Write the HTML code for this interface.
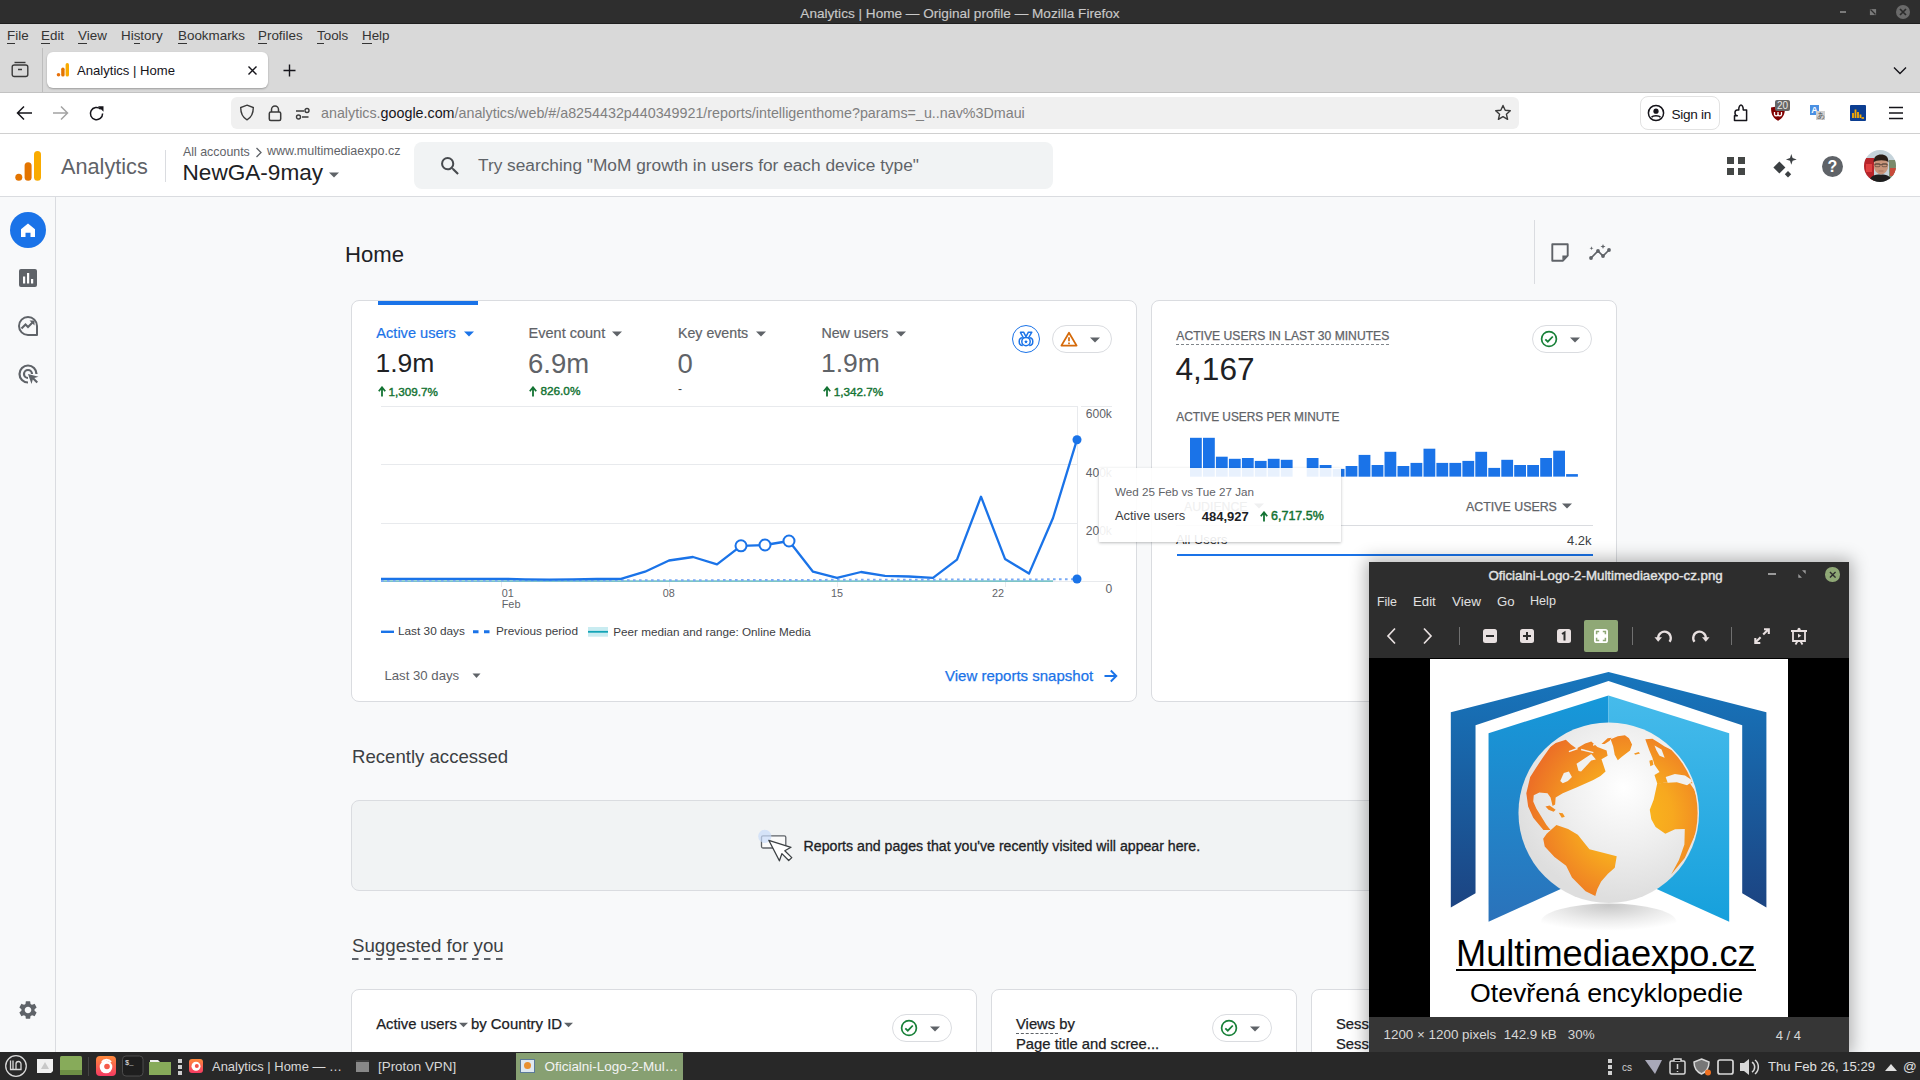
<!DOCTYPE html>
<html><head><meta charset="utf-8">
<style>
*{box-sizing:border-box;margin:0;padding:0}
html,body{width:1920px;height:1080px;overflow:hidden;background:#f8f9fa;font-family:"Liberation Sans",sans-serif;}
.a{position:absolute}
.t{position:absolute;white-space:nowrap;line-height:1}
.card{position:absolute;background:#fff;border:1px solid #dadce0;border-radius:8px}
u{text-decoration:none;border-bottom:1.2px solid currentColor}
</style></head><body>
<div class="a" style="left:0;top:0;width:1920px;height:24px;background:#2e2e2e"></div><div class="a" style="left:0;top:23px;width:1920px;height:1px;background:#1e1e1e"></div>
<div class="t" style="left:0;top:6.5px;width:1920px;text-align:center;font-size:13.6px;color:#c8c8c8;-webkit-text-stroke:0.15px #c8c8c8">Analytics | Home — Original profile — Mozilla Firefox</div>
<div class="a" style="left:1840px;top:11px;width:6px;height:2px;background:#7a7a7a"></div>
<svg class="a" style="left:1869px;top:8px" width="8" height="8" viewBox="0 0 8 8"><rect x="0.9" y="1.1" width="6.2" height="6" fill="#7a7a7a"/><path d="M1.5 1.5L6.5 6.5" stroke="#2e2e2e" stroke-width="1.3"/></svg>
<div class="a" style="left:1896px;top:5px;width:14px;height:14px;border-radius:50%;background:#6a6a6a"></div>
<svg class="a" style="left:1899px;top:8px" width="8" height="8" viewBox="0 0 8 8"><path d="M1 1L7 7M7 1L1 7" stroke="#2b2b2b" stroke-width="1.7"/></svg>
<div class="a" style="left:0;top:24px;width:1920px;height:69px;background:#d9d9d9"></div>
<div class="t " style="left:7px;top:28.66px;font-size:13.4px;color:#343434;"><u>F</u>ile</div>
<div class="t " style="left:41px;top:28.66px;font-size:13.4px;color:#343434;"><u>E</u>dit</div>
<div class="t " style="left:78px;top:28.66px;font-size:13.4px;color:#343434;"><u>V</u>iew</div>
<div class="t " style="left:121px;top:28.66px;font-size:13.4px;color:#343434;">Hi<u>s</u>tory</div>
<div class="t " style="left:178px;top:28.66px;font-size:13.4px;color:#343434;"><u>B</u>ookmarks</div>
<div class="t " style="left:258px;top:28.66px;font-size:13.4px;color:#343434;"><u>P</u>rofiles</div>
<div class="t " style="left:317px;top:28.66px;font-size:13.4px;color:#343434;"><u>T</u>ools</div>
<div class="t " style="left:362px;top:28.66px;font-size:13.4px;color:#343434;"><u>H</u>elp</div>
<div class="a" style="left:0;top:92px;width:1920px;height:1px;background:#c2c2c2"></div>
<svg class="a" style="left:11px;top:61px" width="18" height="17" viewBox="0 0 18 17"><path d="M3.5 1.5h11" stroke="#3a3a3a" stroke-width="1.4" fill="none"/><rect x="1.2" y="4" width="15.6" height="11.5" rx="2" stroke="#3a3a3a" stroke-width="1.4" fill="none"/><path d="M7 8.5h4" stroke="#3a3a3a" stroke-width="1.5"/></svg>
<div class="a" style="left:42px;top:48px;width:1px;height:44px;background:#bdbdbd"></div>
<div class="a" style="left:47px;top:52px;width:221px;height:36px;background:#fff;border-radius:6px;box-shadow:0 1px 2px rgba(0,0,0,.28)"></div>
<svg class="a" style="left:56px;top:62px" width="14" height="16" viewBox="0 0 14 16"><circle cx="2.5" cy="12.8" r="1.8" fill="#e8710a"/><rect x="5.2" y="5.5" width="3.4" height="9.1" rx="1.7" fill="#e37400"/><rect x="9.6" y="1" width="3.4" height="13.6" rx="1.7" fill="#f9ab00"/></svg>
<div class="t " style="left:77px;top:64.41px;font-size:13.1px;color:#15141a;">Analytics | Home</div>
<svg class="a" style="left:247px;top:65px" width="11" height="11" viewBox="0 0 11 11"><path d="M1.5 1.5L9.5 9.5M9.5 1.5L1.5 9.5" stroke="#15141a" stroke-width="1.4"/></svg>
<svg class="a" style="left:283px;top:64px" width="13" height="13" viewBox="0 0 13 13"><path d="M6.5 0.5V12.5M0.5 6.5H12.5" stroke="#15141a" stroke-width="1.4"/></svg>
<svg class="a" style="left:1893px;top:66px" width="14" height="9" viewBox="0 0 14 9"><path d="M1 1.5L7 7.5L13 1.5" stroke="#15141a" stroke-width="1.4" fill="none"/></svg>
<div class="a" style="left:0;top:93px;width:1920px;height:41px;background:#fff;border-bottom:1px solid #d0d0d0"></div>
<svg class="a" style="left:16px;top:105px" width="17" height="16" viewBox="0 0 17 16"><path d="M16 8H2M8 1.5L1.5 8L8 14.5" stroke="#15141a" stroke-width="1.5" fill="none"/></svg>
<svg class="a" style="left:52px;top:105px" width="17" height="16" viewBox="0 0 17 16"><path d="M1 8H15M9 1.5L15.5 8L9 14.5" stroke="#a3a3a3" stroke-width="1.5" fill="none"/></svg>
<svg class="a" style="left:88px;top:105px" width="17" height="17" viewBox="0 0 17 17"><path d="M14.6 8.5A6.1 6.1 0 1 1 12.7 4.1" stroke="#15141a" stroke-width="1.5" fill="none"/><path d="M10 1.2H15.5V6.7Z" fill="#15141a"/></svg>
<div class="a" style="left:231px;top:97px;width:1288px;height:32px;background:#f0f0f0;border-radius:6px"></div>
<svg class="a" style="left:239px;top:104px" width="16" height="17" viewBox="0 0 16 17"><path d="M8 1.2L14.3 3.6C14.3 10 12 13.8 8 15.8C4 13.8 1.7 10 1.7 3.6Z" stroke="#3a3a3a" stroke-width="1.4" fill="none"/></svg>
<svg class="a" style="left:268px;top:104px" width="14" height="18" viewBox="0 0 14 18"><path d="M3.5 8V5.5A3.5 3.5 0 0 1 10.5 5.5V8" stroke="#3a3a3a" stroke-width="1.5" fill="none"/><rect x="1.3" y="8" width="11.4" height="8.6" rx="1.5" stroke="#3a3a3a" stroke-width="1.5" fill="none"/></svg>
<svg class="a" style="left:295px;top:107px" width="16" height="13" viewBox="0 0 16 13"><path d="M1 4H9M13.5 10H7" stroke="#3a3a3a" stroke-width="1.4"/><circle cx="12" cy="3.5" r="2" stroke="#3a3a3a" stroke-width="1.4" fill="none"/><circle cx="3.5" cy="10" r="2" stroke="#3a3a3a" stroke-width="1.4" fill="none"/></svg>
<div class="t " style="left:321px;top:105.90px;font-size:14.3px;color:#808080;">analytics.<span style="color:#15141a">google.com</span>/analytics/web/#/a8254432p440349921/reports/intelligenthome?params=_u..nav%3Dmaui</div>
<svg class="a" style="left:1494px;top:104px" width="18" height="18" viewBox="0 0 18 18"><path d="M9 1.5L11.2 6.3L16.3 6.8L12.4 10.2L13.6 15.3L9 12.6L4.4 15.3L5.6 10.2L1.7 6.8L6.8 6.3Z" stroke="#3a3a3a" stroke-width="1.4" fill="none" stroke-linejoin="round"/></svg>
<div class="a" style="left:1640px;top:96px;width:80px;height:34px;border:1px solid #e2e2e2;border-radius:8px;background:#fff"></div>
<svg class="a" style="left:1647px;top:104px" width="18" height="18" viewBox="0 0 18 18"><circle cx="9" cy="9" r="7.6" stroke="#15141a" stroke-width="1.5" fill="none"/><circle cx="9" cy="7.2" r="2.6" fill="#15141a"/><path d="M4.5 13.3C6 11.3 12 11.3 13.5 13.3" stroke="#15141a" stroke-width="1.6" fill="none"/></svg>
<div class="t " style="left:1671.5px;top:107.58px;font-size:12.9px;color:#15141a;font-size:13.6px;letter-spacing:-0.3px;">Sign in</div>
<svg class="a" style="left:1730px;top:102px" width="20" height="21" viewBox="1730 102 20 21"><path d="M1734.5 120.5V115.8H1737.3C1734.2 115.5 1734.2 110 1737.3 109.9H1738.8C1738.5 106.5 1740.3 105 1741 105C1741.7 105 1743.5 106.5 1743.2 109.9H1746.6V120.5Z" stroke="#15141a" stroke-width="1.5" fill="none" stroke-linejoin="round"/></svg>
<svg class="a" style="left:1770px;top:105px" width="16" height="17" viewBox="0 0 16 17"><path d="M1 2.5L8 1.2L15 2.5C15 10 12.5 13.5 8 15.8C3.5 13.5 1 10 1 2.5Z" fill="#800000"/><path d="M4.5 7V9.5A1.8 1.8 0 0 0 8 9.5V7M8 9.5A1.8 1.8 0 0 0 11.5 9.5V7" stroke="#fff" stroke-width="1.3" fill="none"/></svg>
<div class="t" style="left:1775px;top:100px;width:15px;height:11px;background:#666;border-radius:2px;color:#e8e8e8;font-size:10px;line-height:11px;text-align:center">20</div>
<div class="t" style="left:1810px;top:105px;width:9px;height:10px;background:#4a90e2;color:#fff;font-size:9px;font-weight:bold;line-height:10px;text-align:center">A</div>
<div class="t" style="left:1816px;top:111px;width:9px;height:9px;background:#d0d0d0;color:#555;font-size:8px;line-height:9px;text-align:center">あ</div>
<div class="a" style="left:1850px;top:105px;width:16px;height:16px;background:#0b3d91;border-radius:1px"></div>
<svg class="a" style="left:1850px;top:105px" width="16" height="16" viewBox="0 0 16 16"><path d="M3 13V8M5.5 13V4.5M8 13V7M10.5 13V9.5" stroke="#f9ab00" stroke-width="1.8"/><path d="M11.5 13H14" stroke="#f9ab00" stroke-width="1.6"/></svg>
<svg class="a" style="left:1888px;top:106px" width="16" height="14" viewBox="0 0 16 14"><path d="M1 1.5H15M1 7H15M1 12.5H15" stroke="#15141a" stroke-width="1.5"/></svg>
<div class="a" style="left:0;top:134px;width:1920px;height:63px;background:#fff;border-bottom:1px solid #dadce0"></div>
<svg class="a" style="left:14px;top:150px" width="28" height="32" viewBox="0 0 28 32"><circle cx="4.8" cy="27.3" r="3.5" fill="#e37400"/><rect x="10.6" y="12.3" width="7" height="18.5" rx="3.5" fill="#e37400"/><rect x="20" y="1" width="7" height="29.8" rx="3.5" fill="#f9ab00"/></svg>
<div class="a" style="left:165px;top:150px;width:1px;height:32px;background:#dadce0"></div>
<div class="t " style="left:61px;top:155.83px;font-size:21.7px;color:#5f6368;">Analytics</div>
<div class="t " style="left:183px;top:145.50px;font-size:12.4px;color:#5f6368;">All accounts</div>
<svg class="a" style="left:255px;top:147px" width="8" height="11" viewBox="0 0 8 11"><path d="M1.5 1L6 5.5L1.5 10" stroke="#5f6368" stroke-width="1.3" fill="none"/></svg>
<div class="t " style="left:267px;top:145.42px;font-size:12.5px;color:#5f6368;">www.multimediaexpo.cz</div>
<div class="t " style="left:182.5px;top:161.87px;font-size:22.6px;color:#202124;">NewGA-9may</div>
<svg class="a" style="left:329px;top:172px" width="10" height="6" viewBox="0 0 10 6"><path d="M0 0.5H10L5 5.5Z" fill="#5f6368"/></svg>
<div class="a" style="left:414px;top:142px;width:639px;height:47px;background:#f1f3f4;border-radius:8px"></div>
<svg class="a" style="left:437.7px;top:154px" width="24.4" height="24.4" viewBox="0 0 24 24"><path d="M15.5 14h-.79l-.28-.27A6.47 6.47 0 0 0 16 9.5 6.5 6.5 0 1 0 9.5 16c1.61 0 3.09-.59 4.23-1.57l.27.28v.79l5 4.99L20.49 19l-4.99-5zm-6 0C7.01 14 5 11.99 5 9.5S7.01 5 9.5 5 14 7.01 14 9.5 11.99 14 9.5 14z" fill="#474a4e"/></svg>
<div class="t " style="left:478px;top:157.16px;font-size:17.3px;color:#5f6368;">Try searching "MoM growth in users for each device type"</div>
<svg class="a" style="left:1726px;top:156px" width="20" height="20" viewBox="0 0 20 20"><rect x="1" y="1" width="7" height="7" fill="#444746"/><rect x="12" y="1" width="7" height="7" fill="#444746"/><rect x="1" y="12" width="7" height="7" fill="#444746"/><rect x="12" y="12" width="7" height="7" fill="#444746"/></svg>
<svg class="a" style="left:1770px;top:152px" width="30" height="30" viewBox="1770 152 30 30"><path d="M1779.4 161.5L1785.4 167.5L1779.4 173.5L1773.4 167.5Z" fill="#3c4043"/><path d="M1791.3 154L1792.6 158.1L1796.7 159.4L1792.6 160.7L1791.3 164.8L1790 160.7L1785.9 159.4L1790 158.1Z" fill="#3c4043"/><path d="M1788 171L1791.2 174.2L1788 177.4L1784.8 174.2Z" fill="#3c4043"/></svg>
<div class="a" style="left:1822px;top:156px;width:21px;height:21px;border-radius:50%;background:#5f6368"></div>
<div class="t" style="left:1822px;top:158.5px;width:21px;text-align:center;font-size:16px;font-weight:bold;color:#fff">?</div>
<svg class="a" style="left:1864px;top:150px" width="32" height="32" viewBox="0 0 32 32"><defs><clipPath id="av"><circle cx="16" cy="16" r="16"/></clipPath></defs><g clip-path="url(#av)"><rect width="32" height="32" fill="#c5d3da"/><path d="M0 8H10V32H0Z" fill="#b8242a"/><path d="M2 14H8V22H2Z" fill="#e04040"/><path d="M25 10H32V32H25Z" fill="#7a8a6a"/><path d="M26 18H32V26H26Z" fill="#c84a3a"/><path d="M5 32C6 26 10 24.5 16.5 24.5C23 24.5 27 26 28 32Z" fill="#1e1e1e"/><ellipse cx="17" cy="15.5" rx="7.2" ry="9" fill="#c8957a"/><path d="M9.5 12.5C9.5 6.5 13 4.5 17 4.5C21.5 4.5 24.5 6.5 24.5 12.5C23 9.5 12 9.5 9.5 12.5Z" fill="#2a1e16"/><path d="M10.5 14.5H23.5" stroke="#5a4a40" stroke-width="0.7"/><rect x="11" y="13.5" width="5" height="3.2" rx="1" stroke="#4a3a30" stroke-width="0.6" fill="none"/><rect x="18" y="13.5" width="5" height="3.2" rx="1" stroke="#4a3a30" stroke-width="0.6" fill="none"/><path d="M14.5 21H19.5" stroke="#9a6a58" stroke-width="0.8"/></g></svg>
<div class="a" style="left:55px;top:197px;width:1px;height:855px;background:#dadce0"></div>
<div class="a" style="left:10px;top:212px;width:36px;height:36px;border-radius:50%;background:#1a73e8"></div>
<svg class="a" style="left:19px;top:221px" width="18" height="18" viewBox="0 0 18 18"><path d="M9 2.5L16 8.3V16H11.5V11.8H6.5V16H2V8.3Z" fill="#fff"/></svg>
<svg class="a" style="left:18px;top:268px" width="20" height="20" viewBox="0 0 20 20"><rect x="1" y="1" width="18" height="18" rx="2" fill="#5f6368"/><rect x="5" y="8.5" width="2.2" height="7" fill="#fff"/><rect x="9" y="5" width="2.2" height="10.5" fill="#fff"/><rect x="13" y="11" width="2.2" height="4.5" fill="#fff"/></svg>
<svg class="a" style="left:17px;top:315px" width="22" height="22" viewBox="0 0 22 22"><path d="M20 11A9 9 0 1 0 11 20H20Z" stroke="#5f6368" stroke-width="2" fill="none" stroke-linejoin="round"/><path d="M4.5 13.5L8.5 9.5L11 12L16 7" stroke="#5f6368" stroke-width="2" fill="none"/><path d="M12.5 5.5H17.5V10.5Z" fill="#5f6368"/></svg>
<svg class="a" style="left:17px;top:363px" width="22" height="22" viewBox="0 0 22 22"><path d="M11 19.5A8.5 8.5 0 1 1 19.5 11" stroke="#5f6368" stroke-width="2.2" fill="none"/><path d="M11 15A4 4 0 1 1 15 11" stroke="#5f6368" stroke-width="2.2" fill="none"/><path d="M11 11L14.5 21L15.8 16.5L19.5 20.3L21 18.8L17.3 15L21.5 13.8Z" fill="#5f6368"/></svg>
<svg class="a" style="left:17px;top:999px" width="22" height="22" viewBox="0 0 24 24"><path d="M19.14 12.94c.04-.3.06-.61.06-.94 0-.32-.02-.64-.07-.94l2.03-1.58a.49.49 0 0 0 .12-.61l-1.92-3.32a.488.488 0 0 0-.59-.22l-2.39.96c-.5-.38-1.030-.7-1.62-.94l-.36-2.540a.484.484 0 0 0-.48-.41h-3.84c-.24 0-.43.17-.47.41l-.36 2.54c-.59.24-1.13.57-1.62.94l-2.39-.96c-.22-.08-.47 0-.59.22L2.74 8.87c-.12.21-.08.47.12.61l2.03 1.58c-.05.3-.09.63-.09.94s.02.64.07.94l-2.03 1.58a.49.49 0 0 0-.12.61l1.92 3.32c.12.22.37.29.59.22l2.39-.96c.5.38 1.03.7 1.62.94l.36 2.54c.05.24.24.41.48.41h3.84c.24 0 .44-.17.47-.41l.36-2.54c.59-.24 1.13-.56 1.62-.94l2.39.96c.22.08.47 0 .59-.22l1.92-3.32c.12-.22.07-.47-.12-.61l-2.01-1.58zM12 15.6c-1.98 0-3.6-1.62-3.6-3.6s1.62-3.6 3.6-3.6 3.6 1.62 3.6 3.6-1.62 3.6-3.6 3.6z" fill="#5f6368"/></svg>
<div class="t " style="left:345px;top:244.09px;font-size:22.1px;color:#202124;">Home</div>
<div class="a" style="left:1534px;top:220px;width:1px;height:64px;background:#dadce0"></div>
<svg class="a" style="left:1550px;top:242px" width="20" height="20" viewBox="0 0 20 20"><path d="M2.3 2.3H17.7V13.7L13 18.7H2.3Z" stroke="#5f6368" stroke-width="1.9" fill="none" stroke-linejoin="round"/><path d="M12.4 18V13.4H17.4Z" fill="#5f6368"/></svg>
<svg class="a" style="left:1588px;top:242px" width="24" height="20" viewBox="0 0 24 20"><path d="M3 16L10 9L15 14L21 8" stroke="#5f6368" stroke-width="1.7" fill="none"/><circle cx="3" cy="16" r="1.9" fill="#5f6368"/><circle cx="10" cy="9" r="1.9" fill="#5f6368"/><circle cx="15" cy="14" r="1.9" fill="#5f6368"/><circle cx="21" cy="8" r="1.9" fill="#5f6368"/><path d="M3.5 4.3L4 5.8L5.5 6.3L4 6.8L3.5 8.3L3 6.8L1.5 6.3L3 5.8Z" fill="#5f6368"/><path d="M15 2L15.7 3.8L17.5 4.5L15.7 5.2L15 7L14.3 5.2L12.5 4.5L14.3 3.8Z" fill="#5f6368"/></svg>
<div class="card" style="left:351px;top:300px;width:786px;height:402px"></div>
<div class="a" style="left:378px;top:301px;width:100px;height:4px;background:#1a73e8"></div>
<div class="t " style="left:376.3px;top:325.64px;font-size:14.6px;color:#1a73e8;-webkit-text-stroke:0.2px currentColor;">Active users</div>
<svg class="a" style="left:463.5px;top:330.5px" width="10" height="6" viewBox="0 0 10 6"><path d="M0 0.5H10L5 5.5Z" fill="#1a73e8"/></svg>
<div class="t " style="left:528.6px;top:325.73px;font-size:14.5px;color:#5f6368;-webkit-text-stroke:0.2px currentColor;">Event count</div>
<svg class="a" style="left:612px;top:330.5px" width="10" height="6" viewBox="0 0 10 6"><path d="M0 0.5H10L5 5.5Z" fill="#5f6368"/></svg>
<div class="t " style="left:678px;top:325.98px;font-size:14.2px;color:#5f6368;-webkit-text-stroke:0.2px currentColor;">Key events</div>
<svg class="a" style="left:756px;top:330.5px" width="10" height="6" viewBox="0 0 10 6"><path d="M0 0.5H10L5 5.5Z" fill="#5f6368"/></svg>
<div class="t " style="left:821.4px;top:325.98px;font-size:14.2px;color:#5f6368;-webkit-text-stroke:0.2px currentColor;">New users</div>
<svg class="a" style="left:895.5px;top:330.5px" width="10" height="6" viewBox="0 0 10 6"><path d="M0 0.5H10L5 5.5Z" fill="#5f6368"/></svg>
<div class="t " style="left:375.5px;top:350.37px;font-size:26.5px;color:#202124;">1.9m</div>
<div class="t " style="left:528px;top:349.52px;font-size:27.5px;color:#5f6368;">6.9m</div>
<div class="t " style="left:677.5px;top:349.52px;font-size:27.5px;color:#5f6368;">0</div>
<div class="t " style="left:821px;top:350.37px;font-size:26.5px;color:#5f6368;">1.9m</div>
<svg class="a" style="left:377.5px;top:385.5px" width="8" height="11" viewBox="0 0 8 11"><path d="M4 10.5V2.5M0.8 5.2L4 1.3L7.2 5.2" stroke="#137333" stroke-width="1.8" fill="none"/></svg>
<div class="t " style="left:388.6px;top:385.90px;font-size:11.7px;color:#137333;-webkit-text-stroke:0.4px #137333;">1,309.7%</div>
<svg class="a" style="left:529px;top:385.5px" width="8" height="11" viewBox="0 0 8 11"><path d="M4 10.5V2.5M0.8 5.2L4 1.3L7.2 5.2" stroke="#137333" stroke-width="1.8" fill="none"/></svg>
<div class="t " style="left:540.4px;top:385.81px;font-size:11.8px;color:#137333;-webkit-text-stroke:0.4px #137333;">826.0%</div>
<div class="t " style="left:678px;top:382.84px;font-size:12px;color:#3c4043;">-</div>
<svg class="a" style="left:822.5px;top:385.5px" width="8" height="11" viewBox="0 0 8 11"><path d="M4 10.5V2.5M0.8 5.2L4 1.3L7.2 5.2" stroke="#137333" stroke-width="1.8" fill="none"/></svg>
<div class="t " style="left:833.7px;top:385.90px;font-size:11.7px;color:#137333;-webkit-text-stroke:0.4px #137333;">1,342.7%</div>
<div class="a" style="left:1012px;top:325px;width:28px;height:28px;border-radius:50%;border:1.5px solid #1a73e8"></div>
<svg class="a" style="left:1014px;top:328px" width="24" height="22" viewBox="1014 328 24 22"><path d="M1020.2 332.2H1023.6L1026 336.6L1028.4 332.2H1031.8L1028.5 338" stroke="#1a73e8" stroke-width="1.5" fill="none" stroke-linejoin="round"/><path d="M1023.5 338L1020.2 332.2" stroke="#1a73e8" stroke-width="1.5"/><circle cx="1026" cy="341.6" r="4.2" stroke="#1a73e8" stroke-width="1.5" fill="none"/><path d="M1022.6 337.8C1019.8 337.8 1019.2 340 1019.2 341.6C1019.2 343.4 1020.3 345.6 1022.8 345.6M1029.4 337.8C1032.2 337.8 1032.8 340 1032.8 341.6C1032.8 343.4 1031.7 345.6 1029.2 345.6" stroke="#1a73e8" stroke-width="1.5" fill="none"/><path d="M1026 339.8L1026.6 341.1L1028 341.2L1026.9 342.1L1027.3 343.5L1026 342.7L1024.7 343.5L1025.1 342.1L1024 341.2L1025.4 341.1Z" fill="#1a73e8"/></svg>
<div class="a" style="left:1052px;top:325px;width:60px;height:28px;border-radius:14px;border:1px solid #dadce0;background:#fff"></div>
<svg class="a" style="left:1060px;top:331px" width="18" height="16" viewBox="0 0 18 16"><path d="M9 1.8L16.6 14.6H1.4Z" stroke="#d56a0a" stroke-width="1.8" fill="none" stroke-linejoin="round"/><path d="M9 6.2V10.2M9 11.6V13.2" stroke="#d56a0a" stroke-width="1.7"/></svg>
<svg class="a" style="left:1090px;top:337px" width="10" height="6" viewBox="0 0 10 6"><path d="M0 0.5H10L5 5.5Z" fill="#5f6368"/></svg>
<svg class="a" style="left:0;top:0" width="1920" height="1080" viewBox="0 0 1920 1080">
<g stroke="#e8eaed" stroke-width="1"><path d="M381 406.5H1077M381 464.5H1077M381 523.5H1077M381 581.5H1111"/><path d="M1081 406.5H1112"/></g>
<path d="M1077.5 406V581M501.5 581V587M669.5 581V587M837.5 581V587M1005.5 581V587" stroke="#e8eaed" stroke-width="1"/>
<path d="M381 581.2H1053" stroke="#7cc4c7" stroke-width="1.7"/>
<path d="M381 580.9L1077 579.3" stroke="#7aaaf5" stroke-width="2" stroke-dasharray="2.6,3.4" fill="none"/>
<polyline points="381,578.8 405,578.8 429,578.8 453,578.8 477,578.8 501,578.8 525,579.3 549,579.6 573,579.4 597,579.0 621,578.9 645,571.7 669,560.5 693,557 717,564.4 741,545.8 765,545 789,541 813,571.7 837,577.8 861,572 885,575.8 909,576.5 933,577.8 957,559.7 981,496.7 1005,558.9 1029,573.6 1053,518 1077,439.7" fill="none" stroke="#1a73e8" stroke-width="2.3" stroke-linejoin="round"/>
<circle cx="741" cy="545.8" r="5.5" fill="#fff" stroke="#1a73e8" stroke-width="2"/>
<circle cx="765" cy="545" r="5.5" fill="#fff" stroke="#1a73e8" stroke-width="2"/>
<circle cx="789" cy="541" r="5.5" fill="#fff" stroke="#1a73e8" stroke-width="2"/>
<circle cx="1077" cy="439.7" r="4.5" fill="#1a73e8"/>
<circle cx="1077" cy="579" r="4.5" fill="#1a73e8"/>
</svg>
<div class="t " style="left:1085.7px;top:408.06px;font-size:12.1px;color:#5f6368;">600k</div>
<div class="t " style="left:1085.7px;top:466.56px;font-size:12.1px;color:#5f6368;">400k</div>
<div class="t " style="left:1085.7px;top:525.06px;font-size:12.1px;color:#5f6368;">200k</div>
<div class="t " style="left:1105.5px;top:582.76px;font-size:12.1px;color:#5f6368;">0</div>
<div class="t " style="left:501.7px;top:587.56px;font-size:10.8px;color:#5f6368;">01</div>
<div class="t " style="left:501.7px;top:599.27px;font-size:10.9px;color:#5f6368;">Feb</div>
<div class="t " style="left:662.8px;top:587.56px;font-size:10.8px;color:#5f6368;">08</div>
<div class="t " style="left:831px;top:587.56px;font-size:10.8px;color:#5f6368;">15</div>
<div class="t " style="left:992px;top:587.56px;font-size:10.8px;color:#5f6368;">22</div>
<svg class="a" style="left:380px;top:626px" width="232" height="12"><path d="M1 5.8H14" stroke="#1a73e8" stroke-width="2.4"/><path d="M93 5.8H110" stroke="#1a73e8" stroke-width="3" stroke-dasharray="5.5,5.5"/><rect x="208" y="1" width="20" height="9.7" fill="#c9ecf1"/><path d="M208 5.8H228" stroke="#12a4b6" stroke-width="1.8"/></svg>
<div class="t " style="left:398px;top:625.61px;font-size:11.8px;color:#3c4043;">Last 30 days</div>
<div class="t " style="left:496px;top:625.61px;font-size:11.8px;color:#3c4043;">Previous period</div>
<div class="t " style="left:613.3px;top:625.70px;font-size:11.7px;color:#3c4043;">Peer median and range: Online Media</div>
<div class="t " style="left:384.4px;top:669.33px;font-size:13.2px;color:#5f6368;">Last 30 days</div>
<svg class="a" style="left:472px;top:673px" width="9" height="6" viewBox="0 0 9 6"><path d="M0.5 0.5H8.5L4.5 5Z" fill="#5f6368"/></svg>
<div class="t " style="left:945px;top:668.30px;font-size:15px;color:#1a73e8;-webkit-text-stroke:0.25px #1a73e8;">View reports snapshot</div>
<svg class="a" style="left:1104px;top:669px" width="14" height="14" viewBox="0 0 14 14"><path d="M0.5 7H12.3M6.8 1.5L12.3 7L6.8 12.5" stroke="#1a73e8" stroke-width="1.9" fill="none"/></svg>
<div class="card" style="left:1151px;top:300px;width:466px;height:402px"></div>
<div class="t " style="left:1176.3px;top:330.32px;font-size:12.15px;color:#5f6368;-webkit-text-stroke:0.25px #5f6368;">ACTIVE USERS IN LAST 30 MINUTES</div>
<div class="a" style="left:1176px;top:344px;width:213px;height:0;border-top:1px dashed #80868b"></div>
<div class="a" style="left:1532px;top:325px;width:60px;height:28px;border-radius:14px;border:1px solid #dadce0;background:#fff"></div>
<svg class="a" style="left:1540px;top:330px" width="18" height="18" viewBox="0 0 18 18"><circle cx="9" cy="9" r="7.4" stroke="#188038" stroke-width="1.7" fill="none"/><path d="M5.3 9.3L7.8 11.7L12.8 6.5" stroke="#188038" stroke-width="1.8" fill="none"/></svg>
<svg class="a" style="left:1570px;top:337px" width="10" height="6" viewBox="0 0 10 6"><path d="M0 0.5H10L5 5.5Z" fill="#5f6368"/></svg>
<div class="t " style="left:1175.5px;top:353.95px;font-size:31.6px;color:#202124;">4,167</div>
<div class="t " style="left:1176.3px;top:411.67px;font-size:11.85px;color:#5f6368;-webkit-text-stroke:0.25px #5f6368;">ACTIVE USERS PER MINUTE</div>
<svg class="a" style="left:0;top:0" width="1920" height="1080"><g fill="#1a73e8"><rect x="1190.0" y="437.8" width="11.8" height="38.9"/><rect x="1203.0" y="437.8" width="11.8" height="38.9"/><rect x="1215.9" y="456.7" width="11.8" height="20.0"/><rect x="1228.9" y="458.8" width="11.8" height="17.9"/><rect x="1241.9" y="458.0" width="11.8" height="18.7"/><rect x="1254.8" y="460.9" width="11.8" height="15.8"/><rect x="1267.8" y="458.8" width="11.8" height="17.9"/><rect x="1280.8" y="459.8" width="11.8" height="16.9"/><rect x="1293.8" y="476.7" width="11.8" height="0.0"/><rect x="1306.7" y="458.0" width="11.8" height="18.7"/><rect x="1319.7" y="465.0" width="11.8" height="11.7"/><rect x="1332.7" y="468.9" width="11.8" height="7.8"/><rect x="1345.6" y="466.0" width="11.8" height="10.6"/><rect x="1358.6" y="454.9" width="11.8" height="21.8"/><rect x="1371.6" y="465.0" width="11.8" height="11.7"/><rect x="1384.5" y="451.8" width="11.8" height="24.9"/><rect x="1397.5" y="466.0" width="11.8" height="10.6"/><rect x="1410.5" y="462.9" width="11.8" height="13.7"/><rect x="1423.5" y="448.7" width="11.8" height="28.0"/><rect x="1436.4" y="462.9" width="11.8" height="13.7"/><rect x="1449.4" y="462.9" width="11.8" height="13.7"/><rect x="1462.4" y="460.9" width="11.8" height="15.8"/><rect x="1475.3" y="451.8" width="11.8" height="24.9"/><rect x="1488.3" y="467.9" width="11.8" height="8.8"/><rect x="1501.3" y="459.8" width="11.8" height="16.9"/><rect x="1514.2" y="465.0" width="11.8" height="11.7"/><rect x="1527.2" y="465.0" width="11.8" height="11.7"/><rect x="1540.2" y="458.0" width="11.8" height="18.7"/><rect x="1553.2" y="450.7" width="11.8" height="25.9"/><rect x="1566.1" y="474.1" width="11.8" height="2.6"/></g></svg>
<div class="t " style="left:1184px;top:500.79px;font-size:12.3px;color:#5f6368;-webkit-text-stroke:0.25px #5f6368;">AUDIENCE</div>
<svg class="a" style="left:1254px;top:503px" width="10" height="6" viewBox="0 0 10 6"><path d="M0 0.5H10L5 5.5Z" fill="#5f6368"/></svg>
<div class="t " style="left:1466px;top:500.70px;font-size:12.4px;color:#5f6368;-webkit-text-stroke:0.25px #5f6368;">ACTIVE USERS</div>
<svg class="a" style="left:1562px;top:503px" width="10" height="6" viewBox="0 0 10 6"><path d="M0 0.5H10L5 5.5Z" fill="#5f6368"/></svg>
<div class="a" style="left:1176px;top:525px;width:417px;height:1px;background:#dadce0"></div>
<div class="t " style="left:1176px;top:534.48px;font-size:12.9px;color:#202124;">All Users</div>
<div class="t " style="left:1567px;top:534.40px;font-size:13px;color:#3c4043;">4.2k</div>
<div class="a" style="left:1177px;top:554px;width:416px;height:2px;background:#1a73e8"></div>
<div class="a" style="left:1099px;top:468px;width:242px;height:74px;background:rgba(255,255,255,0.9);box-shadow:0 1px 3px rgba(60,64,67,.35);border-radius:1px"></div>
<div class="t " style="left:1115px;top:485.74px;font-size:11.65px;color:#5f6368;">Wed 25 Feb vs Tue 27 Jan</div>
<div class="t " style="left:1115px;top:509.78px;font-size:12.9px;color:#3c4043;">Active users</div>
<div class="t " style="left:1201.7px;top:509.70px;font-size:13px;color:#202124;font-weight:bold;">484,927</div>
<svg class="a" style="left:1259.5px;top:510.5px" width="8" height="11" viewBox="0 0 8 11"><path d="M4 10.5V2.5M0.8 5.2L4 1.3L7.2 5.2" stroke="#137333" stroke-width="1.8" fill="none"/></svg>
<div class="t " style="left:1271px;top:510.12px;font-size:12.5px;color:#137333;-webkit-text-stroke:0.45px #137333;">6,717.5%</div>
<div class="t " style="left:352px;top:747.96px;font-size:18.6px;color:#3c4043;">Recently accessed</div>
<div class="a" style="left:351px;top:800px;width:1300px;height:91px;background:#f1f3f4;border:1px solid #dadce0;border-radius:8px"></div>
<svg class="a" style="left:755px;top:827px" width="42" height="38" viewBox="755 827 42 38"><rect x="761.5" y="835.8" width="24.3" height="12.2" rx="1.5" stroke="#5f6368" stroke-width="1.3" fill="#fafafa"/><circle cx="764.8" cy="836.4" r="6.6" fill="#c9dcfa" opacity="0.7"/><path d="M768.8 840.3L791 847.3L784.8 850.8L791.8 857.6L788.7 860.5L781.9 853.6L779.4 860.8Z" stroke="#3c4043" stroke-width="1.3" fill="#fff" stroke-linejoin="round"/></svg>
<div class="t " style="left:803.6px;top:839.02px;font-size:14.15px;color:#202124;-webkit-text-stroke:0.3px #202124;">Reports and pages that you've recently visited will appear here.</div>
<div class="t " style="left:352px;top:936.67px;font-size:18.7px;color:#3c4043;">Suggested for you</div>
<svg class="a" style="left:352px;top:957px" width="153" height="4"><path d="M0 2H153" stroke="#5f6368" stroke-width="1.8" stroke-dasharray="6.5,5.5"/></svg>
<div class="card" style="left:351px;top:989px;width:626px;height:120px"></div>
<div class="card" style="left:991px;top:989px;width:306px;height:120px"></div>
<div class="card" style="left:1311px;top:989px;width:306px;height:120px"></div>
<div class="t " style="left:376.2px;top:1017.47px;font-size:14.8px;color:#202124;-webkit-text-stroke:0.25px #202124;">Active users</div>
<svg class="a" style="left:458.5px;top:1022px" width="9" height="6" viewBox="0 0 10 6"><path d="M0 0.5H10L5 5.5Z" fill="#5f6368"/></svg>
<div class="t " style="left:471px;top:1017.39px;font-size:14.9px;color:#202124;-webkit-text-stroke:0.25px #202124;">by Country ID</div>
<svg class="a" style="left:564px;top:1022px" width="9" height="6" viewBox="0 0 10 6"><path d="M0 0.5H10L5 5.5Z" fill="#5f6368"/></svg>
<div class="a" style="left:892px;top:1014px;width:60px;height:28px;border-radius:14px;border:1px solid #dadce0;background:#fff"></div>
<svg class="a" style="left:900px;top:1019px" width="18" height="18" viewBox="0 0 18 18"><circle cx="9" cy="9" r="7.4" stroke="#188038" stroke-width="1.7" fill="none"/><path d="M5.3 9.3L7.8 11.7L12.8 6.5" stroke="#188038" stroke-width="1.8" fill="none"/></svg>
<svg class="a" style="left:930px;top:1026px" width="10" height="6" viewBox="0 0 10 6"><path d="M0 0.5H10L5 5.5Z" fill="#5f6368"/></svg>
<div class="a" style="left:1212px;top:1014px;width:60px;height:28px;border-radius:14px;border:1px solid #dadce0;background:#fff"></div>
<svg class="a" style="left:1220px;top:1019px" width="18" height="18" viewBox="0 0 18 18"><circle cx="9" cy="9" r="7.4" stroke="#188038" stroke-width="1.7" fill="none"/><path d="M5.3 9.3L7.8 11.7L12.8 6.5" stroke="#188038" stroke-width="1.8" fill="none"/></svg>
<svg class="a" style="left:1250px;top:1026px" width="10" height="6" viewBox="0 0 10 6"><path d="M0 0.5H10L5 5.5Z" fill="#5f6368"/></svg>
<div class="t " style="left:1016px;top:1017.47px;font-size:14.8px;color:#202124;-webkit-text-stroke:0.25px #202124;">Views by</div>
<div class="a" style="left:1016px;top:1033px;width:42px;height:0;border-top:1px dashed #5f6368"></div>
<div class="t " style="left:1016px;top:1037.47px;font-size:14.8px;color:#202124;-webkit-text-stroke:0.25px #202124;">Page title and scree...</div>
<div class="t " style="left:1336px;top:1017.47px;font-size:14.8px;color:#202124;-webkit-text-stroke:0.25px #202124;">Sessions</div>
<div class="t " style="left:1336px;top:1037.47px;font-size:14.8px;color:#202124;-webkit-text-stroke:0.25px #202124;">Sessions</div>
<div class="a" style="left:1369px;top:562px;width:480px;height:490px;background:#2d2d2d;box-shadow:0 0 16px 3px rgba(0,0,0,.30)"></div>
<div class="t " style="left:1488.4px;top:569.04px;font-size:13.3px;color:#e4e4e4;-webkit-text-stroke:0.4px #e4e4e4;">Oficialni-Logo-2-Multimediaexpo-cz.png</div>
<div class="a" style="left:1768px;top:573px;width:8px;height:2px;background:#9a9a9a"></div>
<svg class="a" style="left:1798px;top:570px" width="8" height="8" viewBox="0 0 8 8"><path d="M0.3 7.7V4L4 7.7Z M7.7 0.3V4L4 0.3Z" fill="#9a9a9a"/></svg>
<div class="a" style="left:1825px;top:567px;width:14.5px;height:14.5px;border-radius:50%;background:#8fa876"></div>
<svg class="a" style="left:1828.5px;top:570.5px" width="7.5" height="7.5" viewBox="0 0 8 8"><path d="M1 1L7 7M7 1L1 7" stroke="#2d2d2d" stroke-width="1.5"/></svg>
<div class="t " style="left:1377px;top:595.50px;font-size:12.4px;color:#e0e0e0;">File</div>
<div class="t " style="left:1413px;top:594.83px;font-size:13.2px;color:#e0e0e0;">Edit</div>
<div class="t " style="left:1452px;top:594.57px;font-size:13.5px;color:#e0e0e0;">View</div>
<div class="t " style="left:1497px;top:594.83px;font-size:13.2px;color:#e0e0e0;">Go</div>
<div class="t " style="left:1530px;top:595.33px;font-size:12.6px;color:#e0e0e0;">Help</div>
<svg class="a" style="left:1369px;top:616px" width="480" height="40" viewBox="1369 616 480 40">
<g stroke="#e8e0e0" stroke-width="1.7" fill="none">
<path d="M1395 628.5L1388 636L1395 643.5"/><path d="M1424 628.5L1431 636L1424 643.5"/>
<path d="M1658.2 638.5A6.3 6.3 0 1 1 1669.5 641.8" stroke-width="2.3"/><path d="M1705.8 638.5A6.3 6.3 0 1 0 1694.5 641.8" stroke-width="2.3"/>
<path d="M1763.2 634.5L1768.5 629.2M1764 629.2H1768.8V634M1760.6 637.2L1755.3 642.5M1755.3 638V643H1760.3" stroke-width="2.1"/>
</g>
<path d="M1459.5 627V645M1632.5 627V645M1731.5 627V645" stroke="#707070" stroke-width="1"/>
<rect x="1483" y="629" width="14" height="14" rx="2.5" fill="#e8e0e0"/><path d="M1486 636H1494" stroke="#2d2d2d" stroke-width="2"/>
<rect x="1520" y="629" width="14" height="14" rx="2.5" fill="#e8e0e0"/><path d="M1523 636H1531M1527 632V640" stroke="#2d2d2d" stroke-width="2"/>
<rect x="1557" y="629" width="14" height="14" rx="2.5" fill="#e8e0e0"/><path d="M1562 634L1564.5 632.5V640.5" stroke="#2d2d2d" stroke-width="2" fill="none"/>
<rect x="1584" y="620" width="34" height="32" rx="2" fill="#8fa876"/>
<rect x="1594" y="629" width="14" height="14" rx="2.6" fill="#fff"/><path d="M1596.6 634.2V631.6H1599.2M1602.8 631.6H1605.4V634.2M1605.4 637.8V640.4H1602.8M1599.2 640.4H1596.6V637.8" stroke="#8fa876" stroke-width="1.5" fill="none"/>
<path d="M1654.5 637.3H1662L1658.2 641.8Z" fill="#e8e0e0"/><path d="M1709.5 637.3H1702L1705.8 641.8Z" fill="#e8e0e0"/>
<path d="M1791 631H1807M1793 631V641H1805V631M1797.3 641.5L1795.5 644.5M1800.7 641.5L1802.5 644.5" stroke="#e8e0e0" stroke-width="1.8" fill="none"/><path d="M1798 633.8L1801.3 635.8L1798 637.8Z" fill="#e8e0e0"/><circle cx="1799" cy="629.3" r="1.5" fill="#e8e0e0"/>
</svg>
<div class="a" style="left:1369px;top:658px;width:480px;height:359px;background:#000"></div>
<div class="a" style="left:1430px;top:659px;width:358px;height:358px;background:#fff"></div>
<svg class="a" style="left:1430px;top:659px" width="358" height="281" viewBox="0 0 1376 1080">
<defs>
<linearGradient id="ob" x1="0" y1="0" x2="0" y2="1"><stop offset="0" stop-color="#1776bd"/><stop offset="1" stop-color="#1c4482"/></linearGradient>
<linearGradient id="lp" x1="0" y1="0" x2="0" y2="1"><stop offset="0" stop-color="#1699da"/><stop offset="1" stop-color="#2b72ba"/></linearGradient>
<linearGradient id="rp" x1="0" y1="0" x2="0" y2="1"><stop offset="0" stop-color="#46bbeb"/><stop offset="1" stop-color="#16a0dc"/></linearGradient>
<radialGradient id="gl" cx="0.58" cy="0.36" r="0.62"><stop offset="0" stop-color="#ffffff"/><stop offset="0.55" stop-color="#eeeeee"/><stop offset="1" stop-color="#dedede"/></radialGradient>
<radialGradient id="or" gradientUnits="userSpaceOnUse" cx="900" cy="560" r="700"><stop offset="0" stop-color="#fbbd1b"/><stop offset="0.5" stop-color="#f4a020"/><stop offset="1" stop-color="#ec7426"/></radialGradient>
<radialGradient id="sh" cx="0.5" cy="0.05" r="0.7"><stop offset="0" stop-color="#c8c8c8"/><stop offset="0.6" stop-color="#ececec"/><stop offset="1" stop-color="#ffffff"/></radialGradient>
</defs>
<path d="M80 205L686 50L1293 205V955L1200 900V255L686 85L175 255V900L80 955Z" fill="url(#ob)"/>
<path d="M225 285L686 140V800L225 1010Z" fill="url(#lp)"/>
<path d="M1150 285L686 140V800L1150 1010Z" fill="url(#rp)"/>
<ellipse cx="687" cy="1010" rx="260" ry="70" fill="url(#sh)"/>
<circle cx="687" cy="591" r="347" fill="url(#gl)"/>
<g transform="translate(345.9 234.4) scale(0.39153)">
<defs><clipPath id="gc"><circle cx="873.7" cy="913" r="870"/></clipPath>
<radialGradient id="or2" gradientUnits="userSpaceOnUse" cx="1050" cy="950" r="1000"><stop offset="0" stop-color="#fbbd1c"/><stop offset="0.45" stop-color="#f7a81f"/><stop offset="1" stop-color="#ec7026"/></radialGradient></defs>
<g clip-path="url(#gc)">
<g fill="url(#or2)">
<path d="M300 262L350 225L450 195L500 240L555 280L640 230L700 212L760 265L850 300L860 350L800 385L840 505L790 550L720 590L560 660L420 720L350 760L345 830L320 845L300 760L270 720L190 712L135 740L130 800L160 870L210 950L260 1030L300 1080L230 1080L130 960L80 850L62 720L100 560L150 480L230 360Z"/>
<path d="M890 190L960 160L1030 150L1070 180L1100 240L1080 300L1000 360L960 395L930 340L915 260Z"/>
<path d="M800 235L860 180L900 175L880 205L830 235Z"/>
<path d="M1120 330L1165 315L1178 330L1130 342Z"/>
<path d="M1230 190L1300 185L1360 220L1420 260L1500 300L1600 360L1700 480L1760 620L1600 620L1520 600L1430 610L1350 630L1320 540L1370 510L1320 440L1300 370L1270 300Z"/>
<path d="M1270 400L1300 390L1310 440L1280 455Z"/>
<path d="M1346.6 626L1426.8 611L1531.8 607L1636.8 576.7L1713 687L1760 840L1760 1031L1694 1184L1617.7 1355.7L1484 1518L1560.4 1374.8L1613.9 1222L1617.7 1069L1522.2 1073L1426.8 1117L1331.3 1050L1289.3 973.8L1274 882L1312.2 783Z"/>
<path d="M262 1117L357.5 1031L472 1069L567.5 1126.6L643.9 1222L682 1269.8L796.6 1298.5L949.4 1336.7L930.3 1451L863.5 1508.5L796.6 1585L758.5 1661L739.4 1728L643.9 1680L510.2 1546.7L452.9 1432L338.4 1346L242.9 1241L227.6 1164.8Z"/>
<path d="M250 850L290 840L350 880L330 900L280 880Z"/><path d="M380 910L420 915L440 950L410 960Z"/>
</g>
<g fill="#f0f0f0">
<path d="M555 430L700 335L745 388L700 398L600 505L575 500Z"/>
<path d="M395 600L430 520L480 505L510 560L470 600L420 620Z"/>
<path d="M1320 250L1390 290L1420 370L1370 350L1340 300Z"/>
<path d="M1430 560L1520 530L1620 545L1700 600L1640 640L1540 612L1450 615Z"/>
</g>
<g stroke="#f0f0f0" stroke-width="14" fill="none"><path d="M480 310L565 280M600 290L720 320M720 250L760 200"/></g>
</g>
</g>
</svg>
<div class="t " style="left:1456px;top:936.36px;font-size:36.2px;color:#000;">Multimediaexpo.cz</div>
<div class="a" style="left:1456px;top:969px;width:300px;height:2px;background:#000"></div>
<div class="t " style="left:1470px;top:979.70px;font-size:26.7px;color:#000;">Otevřená encyklopedie</div>
<div class="a" style="left:1369px;top:1017px;width:480px;height:35px;background:#363636"></div>
<div class="t " style="left:1383.5px;top:1028.46px;font-size:13.4px;color:#d8d8d8;">1200 × 1200 pixels&nbsp; 142.9 kB&nbsp;&nbsp; 30%</div>
<div class="t " style="left:1775.7px;top:1028.80px;font-size:13px;color:#d8d8d8;">4 / 4</div>
<div class="a" style="left:0;top:1052px;width:1920px;height:28px;background:#282828"></div>
<svg class="a" style="left:0;top:1052px" width="220" height="28" viewBox="0 1052 220 28">
<circle cx="16" cy="1066" r="10.3" stroke="#d8d8d8" stroke-width="1.3" fill="none"/>
<path d="M10.5 1060.5V1069.5H21V1064A2.5 2.5 0 0 0 16 1064V1069M13 1069.5V1060.5" stroke="#d8d8d8" stroke-width="1.3" fill="none"/>
<path d="M37 1059H53V1071L51 1073H37Z" fill="#f0f0f0"/><path d="M45 1062L49 1069H41Z" fill="#c8c8c8"/>
<rect x="60" y="1056" width="22" height="19" rx="1.5" fill="#87ab5a"/><rect x="60" y="1070" width="22" height="5" fill="#6d8f45"/>
<path d="M88.5 1057V1076" stroke="#444" stroke-width="1"/>
<defs><linearGradient id="ff" x1="0" y1="0" x2="0" y2="1"><stop offset="0" stop-color="#ff8a3c"/><stop offset="1" stop-color="#f53a62"/></linearGradient></defs><rect x="96" y="1056" width="20" height="20" rx="4" fill="url(#ff)"/>
<circle cx="106" cy="1067" r="6.3" fill="#fff"/><circle cx="107" cy="1066.5" r="2.8" fill="#f55a4a"/><path d="M102 1062C104 1059 109 1059 111 1062" stroke="#fff" stroke-width="2" fill="none"/>
<rect x="122.5" y="1056" width="20.5" height="20" rx="3.5" fill="#1e1e1e" stroke="#555" stroke-width="0.8"/>
<text x="125" y="1065" font-size="7" fill="#eee" font-family="Liberation Mono">$_</text>
<path d="M149 1062H171V1075H149Z" fill="#87ab5a"/><path d="M150 1060H158L160 1062H150Z" fill="#f0f0f0"/>
<rect x="178" y="1059" width="4" height="4" fill="#cfcfcf"/><rect x="178" y="1065" width="4" height="4" fill="#cfcfcf"/><rect x="178" y="1071" width="4" height="4" fill="#cfcfcf"/>
<rect x="189" y="1059" width="14" height="14" rx="3" fill="url(#ff)"/><circle cx="196" cy="1066.3" r="4.5" fill="#fff"/><circle cx="196.8" cy="1066" r="2" fill="#f2534a"/>
</svg>
<div class="t " style="left:212px;top:1060.84px;font-size:12.95px;color:#d8d8d8;">Analytics | Home — …</div>
<div class="a" style="left:356px;top:1060px;width:13px;height:12px;background:#888;border-top:2px solid #3a3a3a"></div>
<div class="t " style="left:378px;top:1060.46px;font-size:13.4px;color:#d8d8d8;">[Proton VPN]</div>
<div class="a" style="left:516px;top:1053px;width:167px;height:27px;background:#87a072"></div>
<div class="a" style="left:520px;top:1059px;width:15px;height:14px;background:#dfe8f0;border:1px solid #5a7a9a"></div>
<div class="a" style="left:524px;top:1062px;width:7px;height:7px;background:#e89030;border-radius:50%"></div>
<div class="t " style="left:544.5px;top:1060.41px;font-size:13.45px;color:#f4f4f4;">Oficialni-Logo-2-Mul…</div>
<svg class="a" style="left:1600px;top:1052px" width="320" height="28" viewBox="1600 1052 320 28">
<rect x="1608" y="1059" width="4" height="4" fill="#d0d0d0"/><rect x="1608" y="1065" width="4" height="4" fill="#d0d0d0"/><rect x="1608" y="1071" width="4" height="4" fill="#d0d0d0"/>
<text x="1622" y="1071" font-size="10" fill="#d0d0d0" font-family="Liberation Sans">cs</text>
<path d="M1645 1060H1662L1655 1074Z" fill="#a8a8b8"/>
<rect x="1670" y="1061" width="15" height="13" rx="1.5" stroke="#d8d8d8" stroke-width="1.5" fill="none"/><path d="M1674 1061V1059H1681V1061M1677.5 1064V1069M1677.5 1071V1072" stroke="#d8d8d8" stroke-width="1.5"/>
<path d="M1701.5 1059L1709 1062C1709 1068 1706 1072 1701.5 1074C1697 1072 1694 1068 1694 1062Z" stroke="#d8d8d8" stroke-width="1.5" fill="#777"/><circle cx="1708" cy="1072.5" r="3" fill="#f07020"/>
<rect x="1718" y="1060" width="15" height="14" rx="2" stroke="#d8d8d8" stroke-width="1.7" fill="none"/>
<path d="M1740 1063H1744L1749 1059V1075L1744 1071H1740Z" fill="#d8d8d8"/><path d="M1752 1062A6 6 0 0 1 1752 1072M1755 1060A9 9 0 0 1 1755 1074" stroke="#d8d8d8" stroke-width="1.5" fill="none"/>
<path d="M1885 1071L1891 1064L1897 1071Z" fill="#e0e0e0"/>
</svg>
<div class="t " style="left:1768px;top:1059.91px;font-size:13.1px;color:#e0e0e0;">Thu Feb 26, 15:29</div>
<div class="t " style="left:1903px;top:1059.57px;font-size:13.5px;color:#e0e0e0;">@</div>
</body></html>
